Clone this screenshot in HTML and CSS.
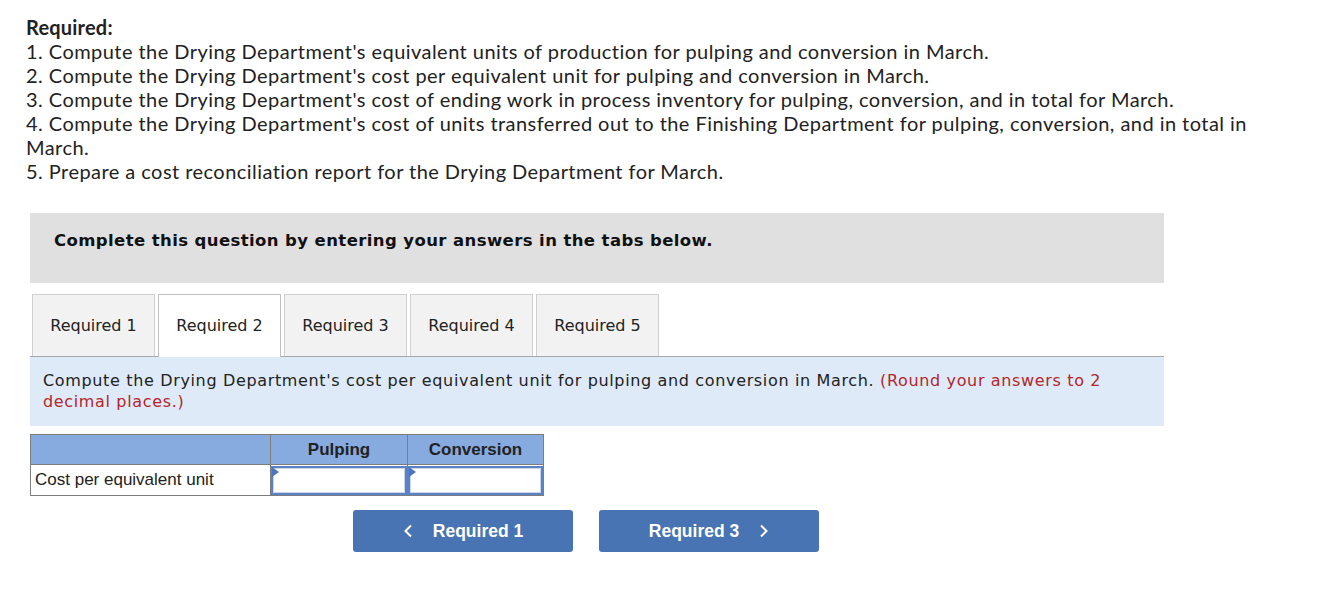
FILE: index.html
```html
<!DOCTYPE html>
<html>
<head>
<meta charset="utf-8">
<link rel="stylesheet" href="styles.css">
</head>
<body>
<div class="page">
  <div class="required">
    <div class="req-title">Required:</div>
    <div>1. Compute the Drying Department's equivalent units of production for pulping and conversion in March.</div>
    <div>2. Compute the Drying Department's cost per equivalent unit for pulping and conversion in March.</div>
    <div>3. Compute the Drying Department's cost of ending work in process inventory for pulping, conversion, and in total for March.</div>
    <div>4. Compute the Drying Department's cost of units transferred out to the Finishing Department for pulping, conversion, and in total in March.</div>
    <div>5. Prepare a cost reconciliation report for the Drying Department for March.</div>
  </div>

  <div class="question">
    <div class="banner">Complete this question by entering your answers in the tabs below.</div>

    <div class="tabs">
      <div class="tab">Required 1</div>
      <div class="tab active">Required 2</div>
      <div class="tab">Required 3</div>
      <div class="tab">Required 4</div>
      <div class="tab">Required 5</div>
    </div>

    <div class="instruction">Compute the Drying Department's cost per equivalent unit for pulping and conversion in March. <span class="red">(Round your answers to 2 decimal places.)</span></div>

    <table class="grid">
      <tr class="head">
        <th class="c1"></th>
        <th class="c2">Pulping</th>
        <th class="c3">Conversion</th>
      </tr>
      <tr class="row">
        <td class="label">Cost per equivalent unit</td>
        <td class="input"><div class="box"><span class="flag"></span></div></td>
        <td class="input"><div class="box"><span class="flag"></span></div></td>
      </tr>
    </table>

    <div class="nav">
      <div class="btn"><svg class="chev" width="10" height="14" viewBox="0 0 10 14"><polyline points="8,1.5 2.5,7 8,12.5" fill="none" stroke="#fff" stroke-width="2"/></svg><span>Required 1</span></div>
      <div class="btn"><span>Required 3</span><svg class="chev" width="10" height="14" viewBox="0 0 10 14"><polyline points="2,1.5 7.5,7 2,12.5" fill="none" stroke="#fff" stroke-width="2"/></svg></div>
    </div>
  </div>
</div>
</body>
</html>
```

FILE: styles.css
```css
* { box-sizing: border-box; }
html, body { margin: 0; padding: 0; background: #fff; }
body { width: 1320px; height: 592px; overflow: hidden; }

.page { padding: 15px 0 0 26px; }

.required {
  font-family: "Lato", "Open Sans", sans-serif;
  font-size: 20px;
  letter-spacing: 0.45px;
  line-height: 24px;
  color: #222;
  width: 1235px;
}
.req-title { font-weight: bold; letter-spacing: 0.2px; }

.question { margin-left: 4px; margin-top: 30px; width: 1134px; }

.banner {
  background: #e0e0e0;
  height: 70px;
  padding: 18px 0 0 24px;
  font-family: "DejaVu Sans", Verdana, sans-serif;
  font-weight: bold;
  font-size: 16.5px;
  letter-spacing: 0.4px;
  color: #111;
}

.tabs {
  display: flex;
  gap: 3px;
  margin-top: 11px;
  padding-left: 2px;
  border-bottom: 1px solid #a8a8a8;
}
.tab {
  width: 123px;
  height: 62px;
  background: #f2f2f2;
  border: 1px solid #cfcfcf;
  border-bottom: none;
  display: flex;
  align-items: center;
  justify-content: center;
  font-family: "DejaVu Sans", Verdana, sans-serif;
  font-size: 16px;
  color: #222;
  margin-bottom: -1px;
}
.tab.active { background: #fff; height: 63px; border-color: #c0c0c0; padding-bottom: 1px; }

.instruction {
  background: #deeaf7;
  height: 69px;
  padding: 13px 40px 0 13px;
  font-family: "DejaVu Sans", Verdana, sans-serif;
  font-size: 16px;
  letter-spacing: 0.65px;
  line-height: 21px;
  color: #222;
}
.red { color: #b3262a; }

.grid {
  margin-top: 8px;
  border-collapse: collapse;
  font-family: "Liberation Sans", Arial, sans-serif;
}
.grid th, .grid td { border: 1px solid #7d7d7d; padding: 0; }
.head th {
  background: #87abdf;
  height: 30px;
  font-size: 17px;
  font-weight: bold;
  color: #222;
  text-align: center;
}
.c1 { width: 240px; }
.c2 { width: 137px; }
.c3 { width: 136px; }
.row td { height: 31px; }
.label { font-size: 17px; color: #222; padding-left: 4px !important; }
.input { position: relative; }
.box {
  height: 29px;
  border: 2px solid #5a82c4;
  position: relative;
  background: #fff;
  box-shadow: inset 0 0 0 1px #c9d7ee;
}
.flag {
  position: absolute;
  left: -1px;
  top: -1px;
  width: 0; height: 0;
  border-top: 5px solid transparent;
  border-bottom: 5px solid transparent;
  border-left: 7px solid #4a76bb;
}

.nav {
  display: flex;
  gap: 26px;
  margin-top: 14px;
  margin-left: 323px;
}
.btn {
  width: 220px;
  height: 42px;
  background: #4874b3;
  border-radius: 3px;
  color: #fff;
  font-family: "Liberation Sans", Arial, sans-serif;
  font-weight: bold;
  font-size: 17.5px;
  display: flex;
  align-items: center;
  justify-content: center;
  gap: 20px;
}
.chev { display: block; }
```
